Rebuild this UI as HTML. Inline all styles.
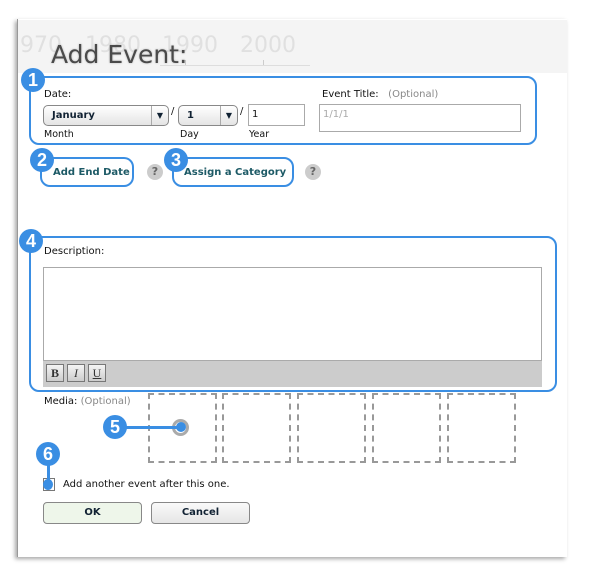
<!DOCTYPE html>
<html><head><meta charset="utf-8"><style>
*{box-sizing:border-box;margin:0;padding:0}
body{width:589px;height:578px;background:#fff;position:relative;overflow:hidden;font-family:"DejaVu Sans","Liberation Sans",sans-serif;font-size:10px;color:#111}
.a{position:absolute}
.panel{left:17px;top:19px;width:550px;height:538px;background:#fff;box-shadow:-2px 2px 4px rgba(0,0,0,.35);border-left:1px solid #999}
.hdr{left:18px;top:20px;width:549px;height:53px;background:#f4f4f4}
.yr{font-size:22px;color:#e0e0e0;top:33px}
.blue{border:2px solid #3a8ee3;border-radius:10px}
.badge{width:24px;height:24px;border-radius:50%;background:#3a8ee3;color:#fff;font-size:18px;font-weight:bold;text-align:center;line-height:24px;font-family:"Liberation Sans",sans-serif}
.sel{border:1px solid #888;border-radius:5px;background:linear-gradient(#fff,#e4e4e4);height:21px;font-weight:bold;color:#123;font-size:10px;line-height:19px;padding-left:8px}
.inp{border:1px solid #aaa;background:#fff}
.btn{border:1px solid #888;border-radius:4px;height:22px;text-align:center;line-height:20px;font-weight:bold;color:#123;font-size:10px}
.q{width:16px;height:16px;border-radius:50%;background:#ccc;color:#666;font-weight:bold;text-align:center;line-height:16px;font-size:11px}
.media{border:2px dashed #999;width:69px;height:70px;top:393px}
.tb{width:18px;height:18px;border:1px solid #777;background:linear-gradient(#f4f4f4,#ccc);font-family:"Liberation Serif",serif;font-size:12px;text-align:center;line-height:16px;top:364px;color:#333}
.lnk{font-weight:bold;color:#1d5a66;font-size:10px}
.tick{width:1px;height:5px;background:#ccc;top:60px}
</style></head><body>
<div class="a panel"></div>
<div class="a hdr"></div>
<div class="a yr" style="left:20px">970</div>
<div class="a yr" style="left:85px">1980</div>
<div class="a yr" style="left:162px">1990</div>
<div class="a yr" style="left:240px">2000</div>
<div class="a tick" style="left:185px"></div>
<div class="a tick" style="left:263px"></div>
<div class="a" style="left:160px;top:65px;width:150px;border-top:1px solid #ddd"></div>
<div class="a" style="left:51px;top:40px;font-size:25px;color:#4a4a4a;font-family:'DejaVu Sans',sans-serif;text-shadow:0 0 2px rgba(0,0,0,.25)">Add Event:</div>

<div class="a blue" style="left:29px;top:76px;width:508px;height:69px"></div>
<div class="a" style="left:44px;top:89px">Date:</div>
<div class="a sel" style="left:43px;top:105px;width:126px">January<span style="position:absolute;right:5px;top:0;border-left:1px solid #aaa;padding-left:5px;font-size:8px">▼</span></div>
<div class="a" style="left:171px;top:106px">/</div>
<div class="a sel" style="left:178px;top:105px;width:60px">1<span style="position:absolute;right:5px;top:0;border-left:1px solid #aaa;padding-left:5px;font-size:8px">▼</span></div>
<div class="a" style="left:240px;top:106px">/</div>
<div class="a inp" style="left:248px;top:104px;width:57px;height:22px;padding:4px 3px">1</div>
<div class="a" style="left:44px;top:129px;font-size:9.5px">Month</div>
<div class="a" style="left:180px;top:129px;font-size:9.5px">Day</div>
<div class="a" style="left:249px;top:129px;font-size:9.5px">Year</div>
<div class="a" style="left:322px;top:89px">Event Title: &nbsp;&nbsp;<span style="color:#888">(Optional)</span></div>
<div class="a inp" style="left:319px;top:104px;width:202px;height:28px;padding:4px 3px;color:#aaa">1/1/1</div>

<div class="a blue" style="left:40px;top:157px;width:94px;height:30px"></div>
<div class="a lnk" style="left:53px;top:167px">Add End Date</div>
<div class="a q" style="left:147px;top:164px">?</div>
<div class="a blue" style="left:172px;top:157px;width:122px;height:30px"></div>
<div class="a lnk" style="left:184px;top:167px">Assign a Category</div>
<div class="a q" style="left:305px;top:164px">?</div>

<div class="a blue" style="left:29px;top:236px;width:528px;height:156px"></div>
<div class="a" style="left:44px;top:246px">Description:</div>
<div class="a inp" style="left:43px;top:267px;width:499px;height:94px"></div>
<div class="a" style="left:43px;top:361px;width:499px;height:26px;background:#ccc"></div>
<div class="a tb" style="left:46px;font-weight:bold">B</div>
<div class="a tb" style="left:67px;font-style:italic">I</div>
<div class="a tb" style="left:88px;text-decoration:underline">U</div>

<div class="a" style="left:44px;top:396px">Media: <span style="color:#888">(Optional)</span></div>
<div class="a media" style="left:148px"></div>
<div class="a media" style="left:222px"></div>
<div class="a media" style="left:297px"></div>
<div class="a media" style="left:372px"></div>
<div class="a media" style="left:447px"></div>
<div class="a" style="left:172px;top:419px;width:17px;height:17px;border-radius:50%;border:3px solid #aaa"></div>
<div class="a" style="left:115px;top:426px;width:68px;height:3px;background:#3a8ee3"></div>
<div class="a" style="left:176px;top:422px;width:10px;height:10px;border-radius:50%;background:#3a8ee3"></div>

<div class="a inp" style="left:43px;top:478px;width:12px;height:13px;border-color:#777"></div>
<div class="a" style="left:47px;top:455px;width:3px;height:28px;background:#3a8ee3"></div>
<div class="a" style="left:43px;top:479px;width:10px;height:11px;border-radius:50%;background:#3a8ee3"></div>
<div class="a" style="left:63px;top:479px">Add another event after this one.</div>
<div class="a btn" style="left:43px;top:502px;width:99px;background:#eef6ea">OK</div>
<div class="a btn" style="left:151px;top:502px;width:99px;background:linear-gradient(#fafafa,#e6e6e6)">Cancel</div>

<div class="a badge" style="left:21px;top:68px">1</div>
<div class="a badge" style="left:30px;top:148px">2</div>
<div class="a badge" style="left:164px;top:148px">3</div>
<div class="a badge" style="left:19px;top:229px">4</div>
<div class="a badge" style="left:103px;top:415px">5</div>
<div class="a badge" style="left:36px;top:442px">6</div>
</body></html>
